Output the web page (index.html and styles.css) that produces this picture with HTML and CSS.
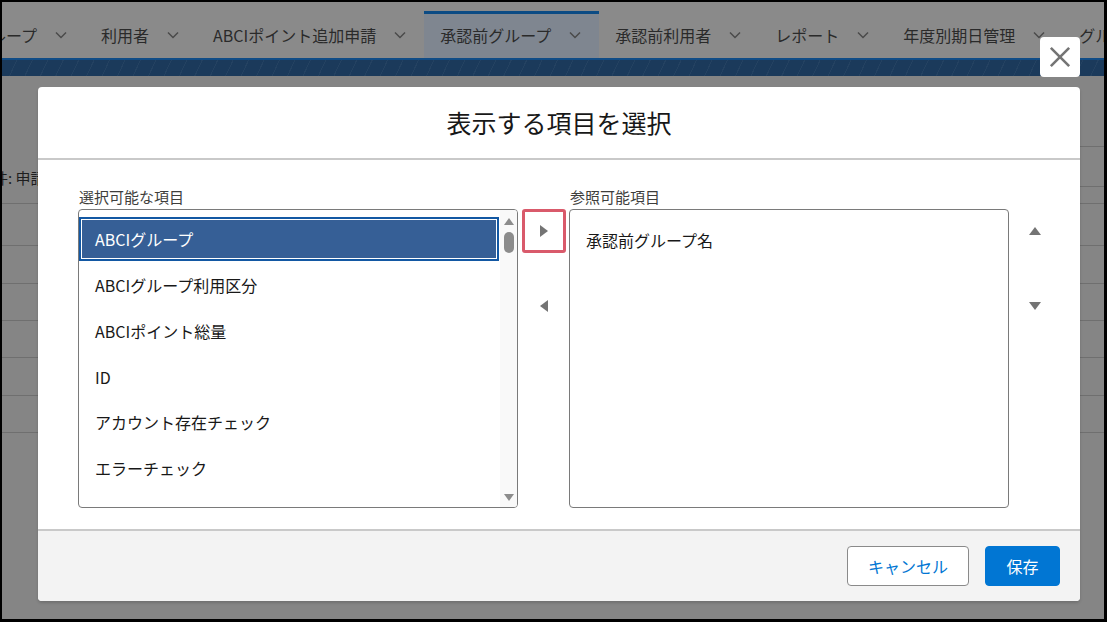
FILE: index.html
```html
<!DOCTYPE html>
<html lang="ja">
<head>
<meta charset="utf-8">
<title>表示する項目を選択</title>
<link rel="stylesheet" href="styles.css">
</head>
<body>
<div class="frame">
  <div class="page">
    <nav class="tabs">
      <div class="tab first"><span>グループ</span><svg class="chev" viewBox="0 0 12 8"><polyline points="1,1.5 6,6.5 11,1.5"/></svg></div>
      <div class="tab"><span>利用者</span><svg class="chev" viewBox="0 0 12 8"><polyline points="1,1.5 6,6.5 11,1.5"/></svg></div>
      <div class="tab"><span>ABCIポイント追加申請</span><svg class="chev" viewBox="0 0 12 8"><polyline points="1,1.5 6,6.5 11,1.5"/></svg></div>
      <div class="tab active"><span>承認前グループ</span><svg class="chev" viewBox="0 0 12 8"><polyline points="1,1.5 6,6.5 11,1.5"/></svg></div>
      <div class="tab"><span>承認前利用者</span><svg class="chev" viewBox="0 0 12 8"><polyline points="1,1.5 6,6.5 11,1.5"/></svg></div>
      <div class="tab"><span>レポート</span><svg class="chev" viewBox="0 0 12 8"><polyline points="1,1.5 6,6.5 11,1.5"/></svg></div>
      <div class="tab"><span>年度別期日管理</span><svg class="chev" viewBox="0 0 12 8"><polyline points="1,1.5 6,6.5 11,1.5"/></svg></div>
      <div class="tab"><span>グループ</span><svg class="chev" viewBox="0 0 12 8"><polyline points="1,1.5 6,6.5 11,1.5"/></svg></div>
    </nav>
    <div class="band"></div>
    <div class="content">
      <div class="filters"></div>
      <div class="meta">
        <div class="meta-left">件: 申請中</div>
        <div class="meta-right"><div class="meta-line"></div></div>
      </div>
      <div class="rows">
        <div class="row r1"></div>
        <div class="row r2"></div>
        <div class="row r3"></div>
        <div class="row r4"></div>
        <div class="row r5"></div>
        <div class="row r6"></div>
        <div class="row r7"></div>
      </div>
    </div>
  </div>

  <section class="modal">
    <header class="modal-header"><h2>表示する項目を選択</h2></header>
    <div class="modal-body">
      <div class="col">
        <div class="label">選択可能な項目</div>
        <div class="listbox">
          <ul class="options">
            <li class="opt selected">ABCIグループ</li>
            <li class="opt">ABCIグループ利用区分</li>
            <li class="opt">ABCIポイント総量</li>
            <li class="opt">ID</li>
            <li class="opt">アカウント存在チェック</li>
            <li class="opt">エラーチェック</li>
          </ul>
          <div class="scrollbar">
            <svg class="sb-arrow" viewBox="0 0 10 7"><polygon points="5,0 10,7 0,7"/></svg>
            <div class="sb-thumb"></div>
            <div class="sb-space"></div>
            <svg class="sb-arrow" viewBox="0 0 10 7"><polygon points="0,0 10,0 5,7"/></svg>
          </div>
        </div>
      </div>
      <div class="btns">
        <button class="move hl" aria-label="追加"><svg class="tri-h" viewBox="0 0 8 12"><polygon points="0,0 8,6 0,12"/></svg></button>
        <button class="move" aria-label="削除"><svg class="tri-h" viewBox="0 0 8 12"><polygon points="8,0 0,6 8,12"/></svg></button>
      </div>
      <div class="col">
        <div class="label">参照可能項目</div>
        <div class="listbox">
          <ul class="options">
            <li class="opt">承認前グループ名</li>
          </ul>
        </div>
      </div>
      <div class="btns">
        <button class="move" aria-label="上へ"><svg class="tri-v" viewBox="0 0 12 8"><polygon points="6,0 12,8 0,8"/></svg></button>
        <button class="move" aria-label="下へ"><svg class="tri-v" viewBox="0 0 12 8"><polygon points="0,0 12,0 6,8"/></svg></button>
      </div>
    </div>
    <footer class="modal-footer">
      <button class="btn neutral">キャンセル</button>
      <button class="btn brand">保存</button>
    </footer>
  </section>

  <button class="close" aria-label="閉じる"><svg viewBox="0 0 24 24"><line x1="2" y1="2" x2="22" y2="22"/><line x1="22" y1="2" x2="2" y2="22"/></svg></button>
</div>
</body>
</html>
```

FILE: styles.css
```css
html, body {
  margin: 0;
  padding: 0;
  background: #000;
}

body {
  font-family: "Noto Sans CJK JP", "Noto Sans", sans-serif;
}

.frame {
  position: relative;
  width: 1107px;
  height: 622px;
  box-sizing: border-box;
  border-style: solid;
  border-color: #000;
  border-width: 2px 3px 3px 2px;
  background: #858585;
  overflow: hidden;
}

/* ---------- page behind the backdrop (already dimmed colours) ---------- */
.tabs {
  display: flex;
  height: 56px;
  box-sizing: border-box;
  padding-top: 9px;
  background: #8a8a8a;
  white-space: nowrap;
  overflow: hidden;
}

.tab {
  flex: none;
  display: flex;
  align-items: center;
  gap: 18px;
  height: 47px;
  box-sizing: border-box;
  padding: 1px 18px 0 16px;
  font-size: 16px;
  color: #2a2a2a;
}

.tab.first {
  margin-left: -44px;
}

.tab.active {
  padding-top: 0;
  padding-bottom: 2px;
  border-top: 3px solid #0b4b84;
  background: #7f8690;
}

.chev {
  width: 12px;
  height: 8px;
  fill: none;
  stroke: #4a4a4a;
  stroke-width: 1.5;
}

.band {
  height: 18px;
  box-sizing: border-box;
  border-top: 2px solid #104c86;
  background-color: #1b3a5b;
  background-image: repeating-linear-gradient(115deg, transparent 0 13px, rgba(255,255,255,0.04) 13px 14px);
}

.content {
  background: #858585;
}

.filters {
  height: 70px;
}

.meta {
  display: flex;
  height: 57px;
}

.meta-left {
  flex: 1;
  margin-left: -9px;
  padding-top: 22px;
  font-size: 15px;
  line-height: 20px;
  color: #1e1e1e;
}

.meta-right {
  width: 200px;
  border-top: 1px solid #6f6f6f;
}

.meta-line {
  height: 39px;
  border-bottom: 1px solid #6f6f6f;
}

.row {
  border-top: 1px solid #6f6f6f;
}
.r1 { height: 41px; }
.r2 { height: 37px; }
.r3 { height: 36px; }
.r4 { height: 36px; }
.r5 { height: 37px; }
.r6 { height: 36px; }
.r7 { height: 100px; }

/* ---------- modal ---------- */
.modal {
  position: absolute;
  left: 36px;
  top: 85px;
  width: 1042px;
  background: #fff;
  border-radius: 4px;
  overflow: hidden;
  box-shadow: 0 2px 3px rgba(0,0,0,0.16);
}

.modal-header {
  display: flex;
  align-items: center;
  justify-content: center;
  height: 71px;
  border-bottom: 2px solid #c9c9c9;
}

.modal-header h2 {
  margin: 0;
  font-size: 25px;
  font-weight: 400;
  color: #181818;
  line-height: 1.25;
}

.modal-body {
  display: flex;
  padding: 27px 23px 21px 40px;
}

.col {
  width: 440px;
  flex: none;
}

.label {
  height: 20px;
  margin-bottom: 2px;
  padding-left: 1px;
  font-size: 15px;
  line-height: 20px;
  color: #3e3e3c;
}

.listbox {
  display: flex;
  height: 299px;
  box-sizing: border-box;
  border: 1px solid #7a7a7a;
  border-radius: 4px;
  overflow: hidden;
}

.options {
  flex: 1;
  margin: 0;
  padding: 7px 0 0 0;
  list-style: none;
  overflow: hidden;
}

.opt {
  display: flex;
  align-items: center;
  height: 45.6px;
  box-sizing: border-box;
  padding-left: 16px;
  font-size: 16px;
  color: #181818;
  white-space: nowrap;
}

.opt.selected {
  height: 44px;
  margin: 0 1px 1.6px 0;
  padding-left: 14px;
  border: 2px solid #1358a3;
  box-shadow: inset 0 0 0 1px #fff;
  background: #365f96;
  color: #fff;
}

.scrollbar {
  display: flex;
  flex-direction: column;
  align-items: center;
  width: 17px;
  padding: 8px 0 6px;
  box-sizing: border-box;
  background: #f9f9f9;
}

.sb-arrow {
  width: 10px;
  height: 7px;
  fill: #8c8c8c;
}

.sb-thumb {
  width: 10px;
  height: 21px;
  margin-top: 7px;
  border-radius: 5px;
  background: #8c8c8c;
}

.sb-space {
  flex: 1;
}

.btns {
  display: flex;
  flex-direction: column;
  gap: 31px;
  width: 44px;
  flex: none;
  margin: 22px 3px 0 4px;
}

.move {
  display: flex;
  align-items: center;
  justify-content: center;
  width: 44px;
  height: 44px;
  padding: 0;
  border: 3px solid transparent;
  border-radius: 3px;
  background: #fff;
}

.move.hl {
  border-color: #d95a6b;
}

.tri-h {
  width: 8px;
  height: 12px;
  fill: #747474;
}

.tri-v {
  width: 12px;
  height: 8px;
  fill: #747474;
}

.modal-footer {
  display: flex;
  justify-content: flex-end;
  gap: 16px;
  padding: 15px 20px;
  border-top: 2px solid #c9c9c9;
  background: #f3f3f3;
}

.btn {
  height: 40px;
  padding: 0;
  border-radius: 4px;
  font-family: "Noto Sans CJK JP", "Noto Sans", sans-serif;
  font-size: 16px;
}

.btn.neutral {
  width: 122px;
  border: 1px solid #8a8a8a;
  background: #fff;
  color: #0176d3;
}

.btn.brand {
  width: 75px;
  border: 1px solid #0176d3;
  background: #0176d3;
  color: #fff;
}

.close {
  position: absolute;
  left: 1038px;
  top: 35px;
  display: flex;
  align-items: center;
  justify-content: center;
  width: 40px;
  height: 40px;
  padding: 0;
  border: none;
  border-radius: 4px;
  background: #fff;
}

.close svg {
  width: 22px;
  height: 22px;
  stroke: #747474;
  stroke-width: 2.8;
}
```
